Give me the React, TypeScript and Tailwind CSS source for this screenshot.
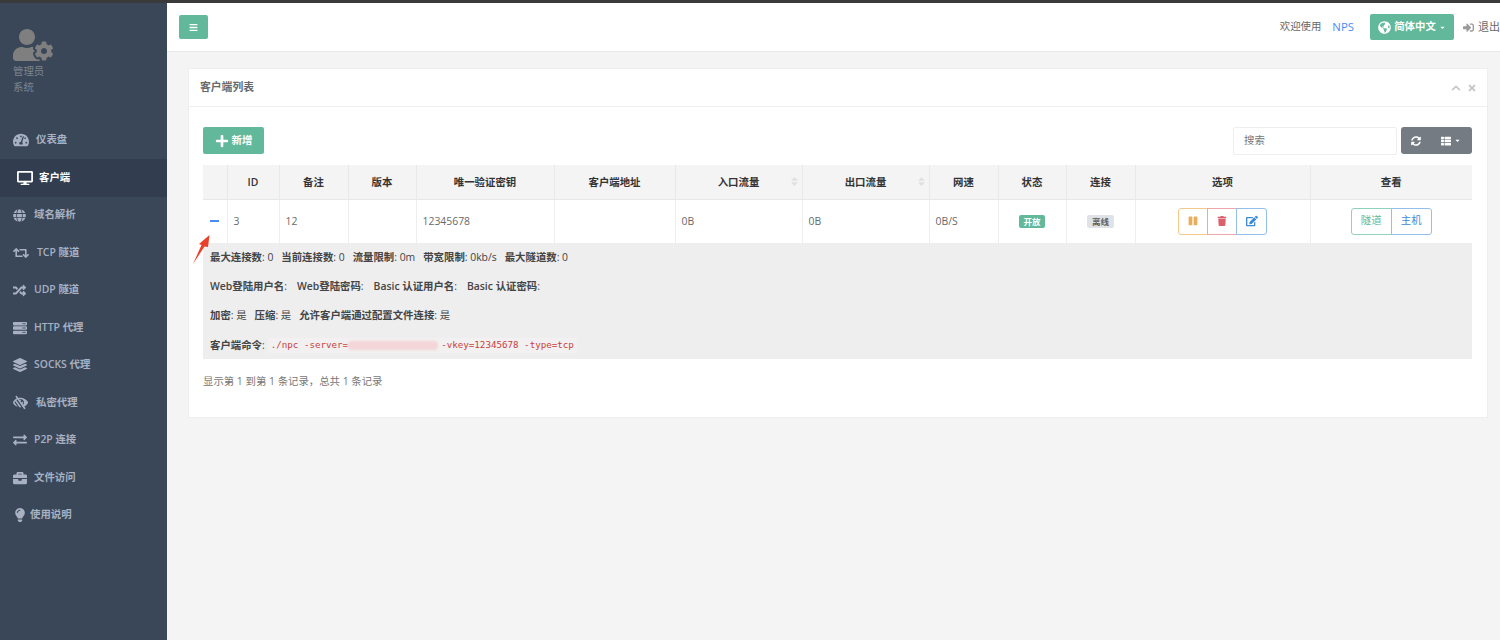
import type { ReactNode } from "react";
import {
  FaBars,
  FaBriefcase,
  FaCaretDown,
  FaChevronUp,
  FaDesktop,
  FaEdit,
  FaExchangeAlt,
  FaGlobe,
  FaGlobeAmericas,
  FaLayerGroup,
  FaLightbulb,
  FaLowVision,
  FaPause,
  FaPlus,
  FaRandom,
  FaRetweet,
  FaServer,
  FaSignInAlt,
  FaSort,
  FaSyncAlt,
  FaTachometerAlt,
  FaThList,
  FaTimes,
  FaTrash,
  FaUserCog,
} from "react-icons/fa";

const FONT = `font-["Open_Sans","Noto_Sans_CJK_SC",sans-serif]`;

const nav: { icon: ReactNode; label: string; indent: string; active?: boolean }[] = [
  { icon: <FaTachometerAlt size={16} />, label: "仪表盘", indent: "gap-[7px]" },
  { icon: <FaDesktop size={16} />, label: "客户端", indent: "gap-[6px] pl-[17px]", active: true },
  { icon: <FaGlobe size={13} />, label: "域名解析", indent: "gap-[8px]" },
  { icon: <FaRetweet size={16} />, label: "TCP 隧道", indent: "gap-[8px]" },
  { icon: <FaRandom size={13} />, label: "UDP 隧道", indent: "gap-[8px]" },
  { icon: <FaServer size={14} />, label: "HTTP 代理", indent: "gap-[7px]" },
  { icon: <FaLayerGroup size={14} />, label: "SOCKS 代理", indent: "gap-[7px]" },
  { icon: <FaLowVision size={15} />, label: "私密代理", indent: "gap-[8px]" },
  { icon: <FaExchangeAlt size={14} />, label: "P2P 连接", indent: "gap-[7px]" },
  { icon: <FaBriefcase size={14} />, label: "文件访问", indent: "gap-[7px]" },
  { icon: <FaLightbulb size={14} />, label: "使用说明", indent: "gap-[3px]" },
];

const columns: { label: string; w: string; sort?: boolean }[] = [
  { label: "", w: "w-[24px]" },
  { label: "ID", w: "w-[52px]" },
  { label: "备注", w: "w-[69px]" },
  { label: "版本", w: "w-[68px]" },
  { label: "唯一验证密钥", w: "w-[138px]" },
  { label: "客户端地址", w: "w-[121px]" },
  { label: "入口流量", w: "w-[127px]", sort: true },
  { label: "出口流量", w: "w-[127px]", sort: true },
  { label: "网速", w: "w-[69px]" },
  { label: "状态", w: "w-[68px]" },
  { label: "连接", w: "w-[69px]" },
  { label: "选项", w: "w-[175px]" },
  { label: "查看", w: "w-[162px]" },
];

const cell = "border-r border-[#eeeeee] px-[6px] pt-[2px] text-[10.4px] text-[#676a6c] last:border-r-0";

function Sidebar() {
  return (
    <aside className="flex w-[167px] shrink-0 flex-col bg-[#3a4759] text-[#a7b1c2]">
      <div className="h-[118.5px] pl-[13px] pt-[22px] text-[10.4px] leading-[16px] text-[#7d8590]">
        <FaUserCog size={40} className="mb-[-2px] text-[#7f7f7f]" />
        <p>管理员</p>
        <p>系统</p>
      </div>
      {nav.map((item) => (
        <div
          key={item.label}
          className={`flex h-[37.5px] items-center pl-[13px] text-[10.4px] font-semibold ${item.indent} ${
            item.active ? "bg-[#323e4f] text-white" : ""
          }`}
        >
          {item.icon}
          <span>{item.label}</span>
        </div>
      ))}
    </aside>
  );
}

function TopBar() {
  return (
    <header className="flex h-[49px] shrink-0 items-center justify-between border-b border-[#e7eaec] bg-white pl-[12px] text-[10.4px] text-[#676a6c]">
      <button className="flex h-[24px] w-[29px] items-center justify-center rounded-[2px] bg-[#62b89a] text-white">
        <FaBars size={9} />
      </button>
      <div className="flex items-center">
        <span>欢迎使用</span>
        <span className="ml-[11px] text-[11.4px] text-[#4a8cf7]">NPS</span>
        <button className="ml-[16px] flex h-[26px] w-[84px] items-center justify-center gap-[3px] rounded-[2px] bg-[#62b89a] font-semibold text-white">
          <FaGlobeAmericas size={13} />
          简体中文
          <FaCaretDown size={7} />
        </button>
        <FaSignInAlt size={11} className="ml-[9px] text-[#9a9a9a]" />
        <span className="ml-[4px] w-[22px] text-[11px] whitespace-nowrap">退出</span>
      </div>
    </header>
  );
}

function ClientTable() {
  return (
    <table className="w-[1269px] table-fixed border-collapse">
      <thead>
        <tr className="h-[34px] border-b border-[#e7e7e7] bg-[#f4f4f4]">
          {columns.map((c) => (
            <th key={c.label} className={`relative border-r border-[#e9e9e9] pt-[2px] text-[10.4px] font-semibold text-[#333333] last:border-r-0 ${c.w}`}>
              {c.label}
              {c.sort && <FaSort size={11} className="absolute top-[11px] right-[2px] text-[#dfe1e3]" />}
            </th>
          ))}
        </tr>
      </thead>
      <tbody>
        <tr className="h-[44px] bg-white">
          <td className={`${cell} text-center`}>
            <span className="inline-block h-[2px] w-[9px] translate-y-[-3px] bg-[#4a8cf7]" />
          </td>
          <td className={cell}>3</td>
          <td className={cell}>12</td>
          <td className={cell}></td>
          <td className={cell}>12345678</td>
          <td className={cell}></td>
          <td className={cell}>0B</td>
          <td className={cell}>0B</td>
          <td className={cell}>0B/S</td>
          <td className={`${cell} text-center`}>
            <span className="inline-block rounded-[2px] bg-[#62b89a] px-[4.5px] text-[8.5px] leading-[13px] font-bold text-white">开放</span>
          </td>
          <td className={`${cell} text-center`}>
            <span className="inline-block rounded-[2px] bg-[#dfe3e7] px-[4.5px] text-[8.5px] leading-[13px] font-semibold text-[#5e5e5e]">离线</span>
          </td>
          <td className={`${cell} text-center`}>
            <div className="inline-flex h-[27px] translate-y-[-1px] align-middle">
              <span className="flex w-[30px] items-center justify-center rounded-l-[3px] border border-[#f5c98a] text-[#e9ae5c]">
                <FaPause size={10} />
              </span>
              <span className="ml-[-1px] flex w-[30px] items-center justify-center border border-[#eea5ad] text-[#dc5f6c]">
                <FaTrash size={10} />
              </span>
              <span className="ml-[-1px] flex w-[31px] items-center justify-center rounded-r-[3px] border border-[#93bfec] text-[#3f8ad8]">
                <FaEdit size={12} />
              </span>
            </div>
          </td>
          <td className={`${cell} text-center`}>
            <div className="inline-flex h-[27px] translate-y-[-1px] align-middle">
              <span className="flex w-[41px] items-center justify-center rounded-l-[3px] border border-[#8fd3bb] text-[#62b89a]">隧道</span>
              <span className="ml-[-1px] flex w-[41px] items-center justify-center rounded-r-[3px] border border-[#93bfec] text-[#3f8ad8]">主机</span>
            </div>
          </td>
        </tr>
        <tr className="bg-[#eeeeee]">
          <td colSpan={13} className="px-[7px] pt-[6px] pb-[6px] text-[10.4px] leading-[16px] text-[#444444]">
            <DetailRow>
              <b className="font-semibold">最大连接数</b>: 0<Gap />
              <b className="font-semibold">当前连接数</b>: 0<Gap />
              <b className="font-semibold">流量限制</b>: 0m<Gap />
              <b className="font-semibold">带宽限制</b>: 0kb/s<Gap />
              <b className="font-semibold">最大隧道数</b>: 0
            </DetailRow>
            <DetailRow>
              <b className="font-semibold">Web登陆用户名</b>:<Gap wide />
              <b className="font-semibold">Web登陆密码</b>:<Gap wide />
              <b className="font-semibold">Basic 认证用户名</b>:<Gap wide />
              <b className="font-semibold">Basic 认证密码</b>:
            </DetailRow>
            <DetailRow>
              <b className="font-semibold">加密</b>: 是<Gap />
              <b className="font-semibold">压缩</b>: 是<Gap />
              <b className="font-semibold">允许客户端通过配置文件连接</b>: 是
            </DetailRow>
            <div className="mt-[14px] flex h-[16px] items-center whitespace-pre">
              <b className="font-semibold">客户端命令</b>:
              <code className={`ml-[3px] flex h-[15px] items-center rounded-[2px] bg-[#f2f0f0] px-[3px] font-["DejaVu_Sans_Mono",monospace] text-[9.2px] text-[#c7403f]`}>
                ./npc -server=
                <span className="h-[9px] w-[90px] rounded-[4px] bg-[#f4d5d8] blur-[1px]" />
                <span className="ml-[3px]">-vkey=12345678 -type=tcp</span>
              </code>
            </div>
          </td>
        </tr>
      </tbody>
    </table>
  );
}

function DetailRow({ children }: { children: ReactNode }) {
  return <div className="mb-[13px] flex h-[16px] items-center whitespace-pre last-of-type:mb-0">{children}</div>;
}

function Gap({ wide }: { wide?: boolean }) {
  return <span className={wide ? "w-[10px]" : "w-[8px]"} />;
}

function ClientCard() {
  return (
    <section className="relative ml-[21px] h-[350px] w-[1300px] border border-[#eeeeee] bg-white">
      <div className="flex h-[38px] items-center justify-between border-b border-[#eeeeee] pr-[10px] pl-[11px]">
        <h5 className="text-[10.8px] font-semibold text-[#676a6c]">客户端列表</h5>
        <div className="flex items-center gap-[6px] text-[#c4c6c8]">
          <FaChevronUp size={10} />
          <FaTimes size={10} />
        </div>
      </div>
      <div className="pt-[20px] pr-[15px] pl-[14px]">
        <div className="mb-[11px] flex h-[27px] items-center justify-between">
          <button className="flex h-[27px] w-[61px] items-center justify-center gap-[3px] rounded-[2px] bg-[#62b89a] text-[10.4px] font-semibold text-white">
            <FaPlus size={14} />
            新增
          </button>
          <div className="flex items-center">
            <div className="flex h-[28px] w-[164px] items-center rounded-[2px] border border-[#eeeeee] pl-[10px] text-[10.4px] text-[#777777]">搜索</div>
            <div className="ml-[4px] flex h-[27px] w-[71px] items-center rounded-[3px] bg-[#757b83] pl-[10px] text-white">
              <FaSyncAlt size={10} />
              <FaThList size={10} className="ml-[20px]" />
              <FaCaretDown size={7} className="ml-[3px]" />
            </div>
          </div>
        </div>
        <ClientTable />
        <p className="mt-[14px] text-[10.4px] leading-[16px] text-[#777777]">显示第 1 到第 1 条记录，总共 1 条记录</p>
      </div>
      {/* 红色标注箭头 */}
      <svg className="absolute top-[165px] left-[2px] h-[30px] w-[20px]" viewBox="0 0 20 30">
        <path d="M2 30 L10.5 11 L8 10 L18.5 1 L17 13 L13.5 12.5 Z" fill="#e8402a" />
      </svg>
    </section>
  );
}

export default function App() {
  return (
    <div className={`flex h-[640px] w-[1500px] flex-col overflow-hidden bg-[#f4f4f4] ${FONT}`}>
      <div className="h-[3px] shrink-0 bg-[#3a3a3a]" />
      <div className="flex min-h-0 flex-1">
        <Sidebar />
        <main className="flex min-w-0 flex-1 flex-col">
          <TopBar />
          <div className="pt-[16px]">
            <ClientCard />
          </div>
        </main>
      </div>
    </div>
  );
}
